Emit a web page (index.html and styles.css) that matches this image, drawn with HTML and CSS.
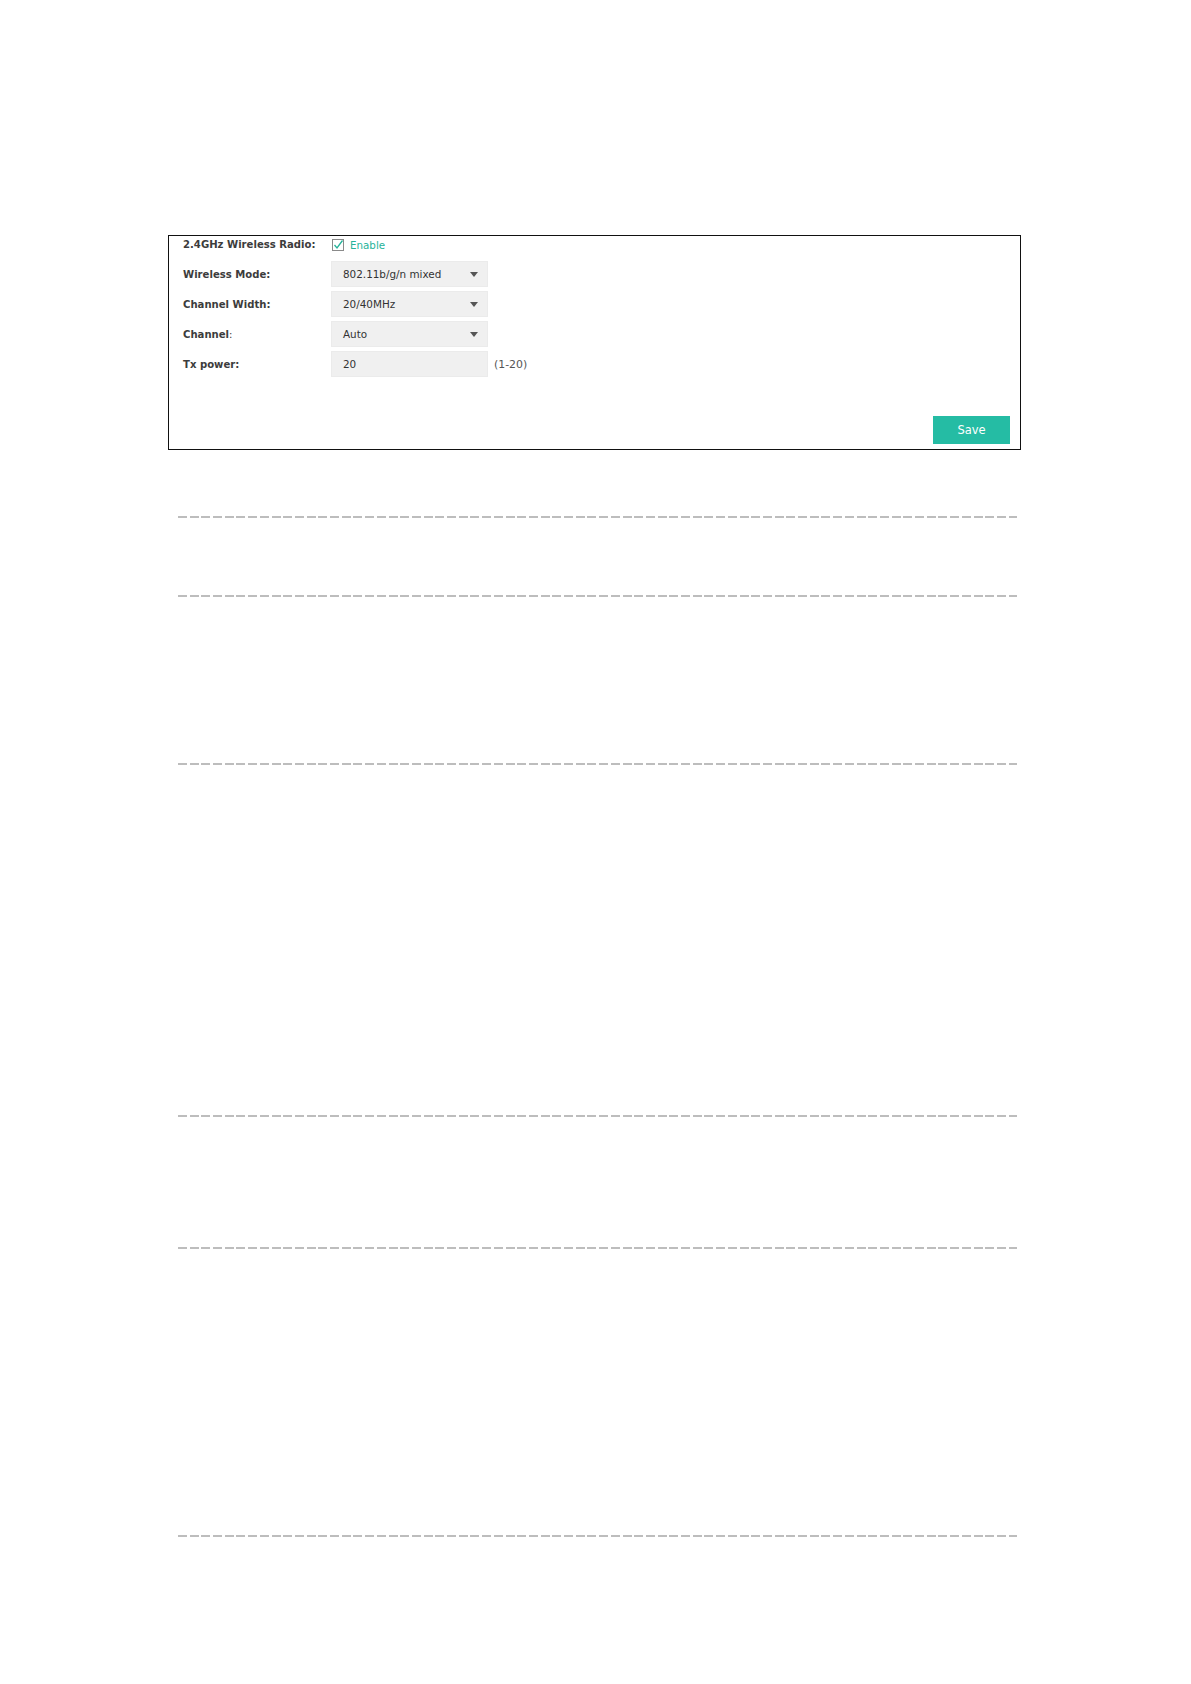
FILE: index.html
```html
<!DOCTYPE html>
<html lang="en">
<head>
    <meta charset="UTF-8">
    <meta name="viewport" content="width=device-width, initial-scale=1.0">
    <title>Wireless Settings</title>
    <link rel="stylesheet" href="styles.css">
</head>
<body>
<div class="page">
    <div class="panel">
        <div class="form-row radio-row">
            <span class="label">2.4GHz Wireless Radio:</span>
            <span class="check">
                <svg class="check-box" width="12" height="12" viewBox="0 0 12 12">
                    <rect x="0.5" y="0.5" width="11" height="11" fill="#fff" stroke="#8a8a8a"/>
                    <path d="M2.5 6 L5 9 L10.5 1.5" fill="none" stroke="#26b39a" stroke-width="1.3"/>
                </svg>
                <span class="check-text">Enable</span>
            </span>
        </div>
        <div class="form-row">
            <span class="label">Wireless Mode:</span>
            <div class="select"><span>802.11b/g/n mixed</span><i class="arrow"></i></div>
        </div>
        <div class="form-row">
            <span class="label">Channel Width:</span>
            <div class="select"><span>20/40MHz</span><i class="arrow"></i></div>
        </div>
        <div class="form-row">
            <span class="label">Channel<span class="thin">:</span></span>
            <div class="select"><span>Auto</span><i class="arrow"></i></div>
        </div>
        <div class="form-row">
            <span class="label">Tx power:</span>
            <div class="select input"><span>20</span></div>
            <span class="hint">(1-20)</span>
        </div>
        <div class="actions">
            <button class="btn-save">Save</button>
        </div>
    </div>

    <div class="rule r1"></div>
    <div class="rule r2"></div>
    <div class="rule r3"></div>
    <div class="rule r4"></div>
    <div class="rule r5"></div>
    <div class="rule r6"></div>
</div>
</body>
</html>
```

FILE: styles.css
```css
body {
    margin: 0;
    background-color: #ffffff;
    font-family: "DejaVu Sans", Verdana, sans-serif;
    color: #333333;
}

.page {
    width: 1191px;
    padding-top: 235px;
    padding-bottom: 100px;
}

.panel {
    box-sizing: border-box;
    width: 853px;
    height: 215px;
    margin-left: 168px;
    border: 1px solid #111111;
    padding: 0 10px 5px 14px;
    display: flex;
    flex-direction: column;
}

.form-row {
    display: flex;
    align-items: center;
    height: 26px;
    margin-bottom: 4px;
}

.radio-row {
    height: 17px;
    margin-bottom: 8px;
}

.label {
    width: 148px;
    font-size: 10.1px;
    font-weight: bold;
    color: #3c3c3c;
}

.thin {
    font-weight: normal;
}

.check {
    display: flex;
    align-items: center;
}

.check-box {
    margin-left: 1px;
    margin-right: 6px;
}

.check-text {
    font-size: 10.3px;
    color: #26b39a;
}

.select {
    box-sizing: border-box;
    width: 157px;
    height: 26px;
    background-color: #f0f0f0;
    border: 1px solid #ebebeb;
    padding: 0 9px 0 11px;
    display: flex;
    align-items: center;
    justify-content: space-between;
    font-size: 10.4px;
    color: #333333;
}

.arrow {
    width: 0;
    height: 0;
    border-left: 4px solid transparent;
    border-right: 4px solid transparent;
    border-top: 5px solid #555555;
}

.hint {
    margin-left: 6px;
    font-size: 10.9px;
    color: #555555;
}

.actions {
    margin-top: auto;
    display: flex;
    justify-content: flex-end;
}

.btn-save {
    width: 77px;
    height: 28px;
    border: none;
    background-color: #25bca4;
    color: #ffffff;
    font-family: "DejaVu Sans", Verdana, sans-serif;
    font-size: 11.5px;
    cursor: pointer;
}

.rule {
    width: 839px;
    height: 2px;
    margin-left: 178px;
    background: repeating-linear-gradient(to right, #bdbdbd 0, #bdbdbd 9px, transparent 9px, transparent 11.7px);
}

.r1 { margin-top: 66px; }
.r2 { margin-top: 77px; }
.r3 { margin-top: 166px; }
.r4 { margin-top: 350px; }
.r5 { margin-top: 130px; }
.r6 { margin-top: 286px; }
```
